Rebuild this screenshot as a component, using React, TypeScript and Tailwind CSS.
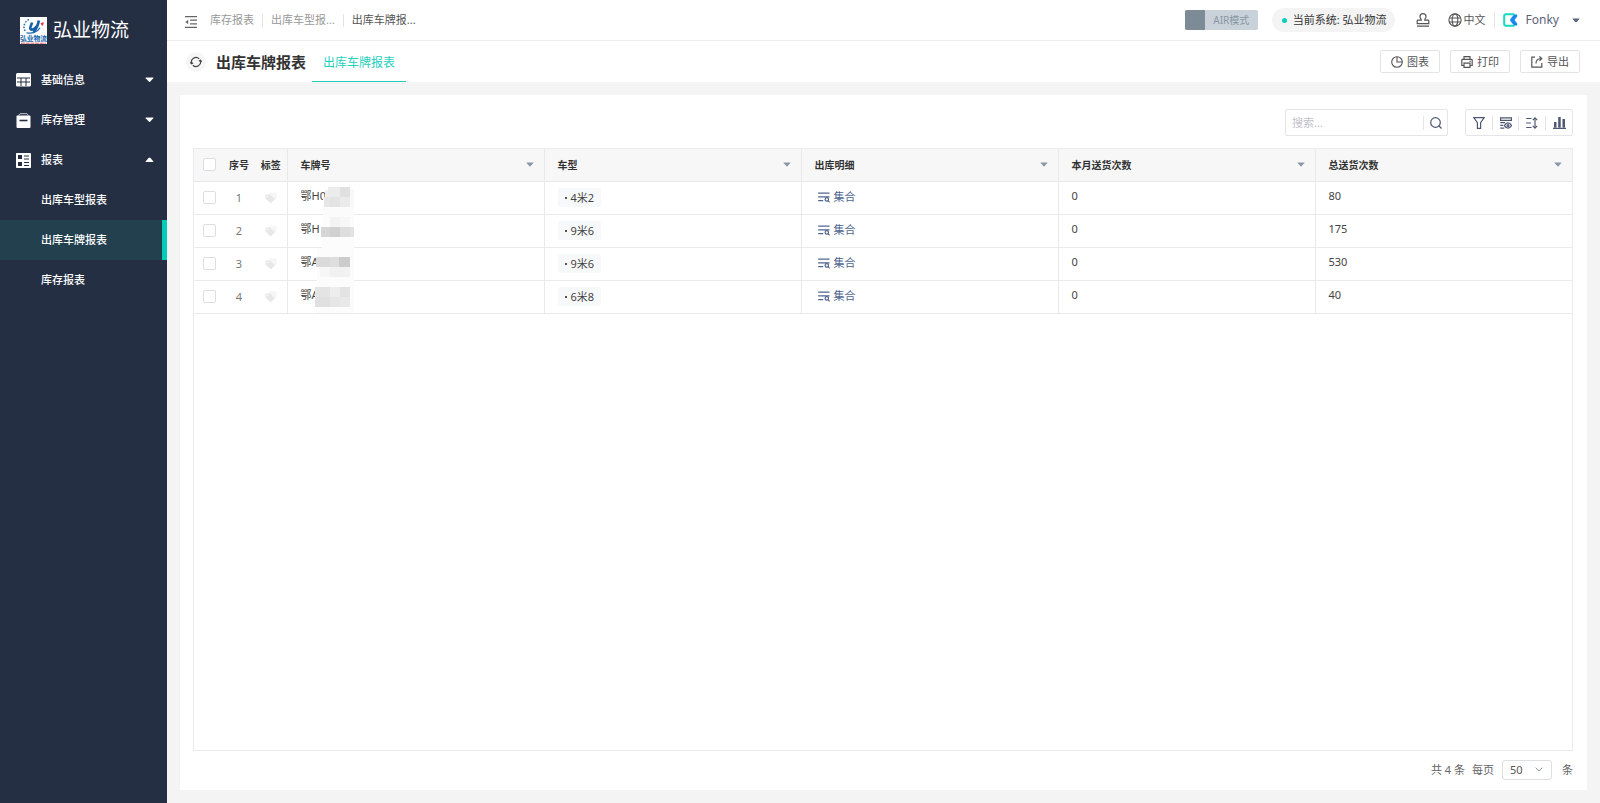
import React, { useState } from 'react';

type IconProps = { className?: string };

interface Row {
  id: number;
  plate: string;
  model: string;
  month: number;
  total: number;
  mask: [number, number, number, number, string][];
}

// mask: x, y, width, height, fill of every block laid over the plate number
const ROWS: Row[] = [
  {
    id: 1,
    plate: '鄂H0',
    model: '4米2',
    month: 0,
    total: 80,
    mask: [
      [23, 15, 31, 18, '#fbfbfb'],
      [25, 8, 6, 7, '#eeeeee'],
      [28, 5, 12, 10, '#ececec'],
      [40, 5, 10, 10, '#e0e0e0'],
      [50, 7, 4, 18, '#f8f8f8'],
      [24, 15, 6, 10, '#e6e6e6'],
      [30, 15, 10, 10, '#e3e3e3'],
      [40, 15, 10, 10, '#ebebeb'],
    ],
  },
  {
    id: 2,
    plate: '鄂H',
    model: '9米6',
    month: 0,
    total: 175,
    mask: [
      [22, 0, 32, 33, '#fcfcfc'],
      [30, 2, 10, 10, '#f3f3f3'],
      [40, 2, 10, 10, '#f7f7f7'],
      [21, 12, 9, 10, '#d6d6d6'],
      [30, 12, 10, 10, '#d0d0d0'],
      [40, 12, 10, 10, '#dddddd'],
      [50, 12, 4, 10, '#e2e2e2'],
    ],
  },
  {
    id: 3,
    plate: '鄂A',
    model: '9米6',
    month: 0,
    total: 530,
    mask: [
      [17, 0, 37, 33, '#fcfcfc'],
      [16, 9, 14, 10, '#dadada'],
      [30, 9, 9, 10, '#dedede'],
      [39, 9, 11, 10, '#cccccc'],
      [20, 19, 10, 10, '#f7f7f7'],
      [30, 19, 20, 10, '#f1f1f1'],
    ],
  },
  {
    id: 4,
    plate: '鄂A',
    model: '6米8',
    month: 0,
    total: 40,
    mask: [
      [16, 0, 38, 32, '#fcfcfc'],
      [15, 6, 15, 10, '#e4e4e4'],
      [30, 6, 10, 10, '#ededed'],
      [40, 6, 10, 10, '#e3e3e3'],
      [15, 16, 15, 10, '#e0e0e0'],
      [30, 16, 10, 10, '#e6e6e6'],
      [40, 16, 10, 10, '#e9e9e9'],
    ],
  },
];

const COLUMNS = ['车牌号', '车型', '出库明细', '本月送货次数', '总送货次数'];

function Caret({ className }: IconProps) {
  return (
    <svg viewBox="0 0 10 6" className={className} fill="currentColor" aria-hidden="true">
      <path d="M1 0.5h8q.6.2.2.8L5.6 5.4q-.6.5-1.2 0L.8 1.3Q.4.7 1 .5z" />
    </svg>
  );
}

function LogoIcon() {
  return (
    <svg viewBox="0 0 27 27" className="size-[27px] shrink-0" aria-hidden="true">
      <rect width="27" height="27" fill="#fff" />
      <path d="M9 2.600A8 8 0 0 0 4 9q-.3 3.500 2 6" fill="none" stroke="#1c69ae" strokeWidth="1.500" strokeDasharray="1.600 1.400" />
      <path d="M6.500 15.800c5 1.200 11-.5 13.500-5" fill="none" stroke="#1c69ae" strokeWidth="1.300" />
      <path d="M12 5.500c-.5 3-2.500 4.500-1.500 6.500 1.500 2 5-1 6.500-3" fill="none" stroke="#1660a8" strokeWidth="2.600" />
      <path d="M18.800 3.500c-.5 4-2.300 8-5.300 11.500" fill="none" stroke="#1660a8" strokeWidth="2.600" />
      <path d="m21 6.500 2.300-.7-.8 2.600z" fill="#e03a3e" stroke="#e03a3e" />
      <text x="13.500" y="23.600" textAnchor="middle" fontSize="6.800" fontWeight="700" fill="#1565ad">
        弘业物流
      </text>
      <path d="M1 26.200h25" stroke="#dc5a5e" strokeWidth="1" strokeDasharray="4 .7" />
    </svg>
  );
}

function TableIcon() {
  return (
    <svg viewBox="0 0 15 14" className="h-[14px] w-[15px]" aria-hidden="true">
      <rect width="15" height="13.500" rx="1.500" fill="#fff" />
      <path d="M1 5h13M1 9h13M5 5v8M10 5v8" stroke="#252f44" strokeWidth="1" fill="none" />
    </svg>
  );
}

function BoxIcon() {
  return (
    <svg viewBox="0 0 15 15" className="size-[15px]" aria-hidden="true">
      <path d="M2.500 2.500 4 .7h7l1.500 1.800" fill="none" stroke="#c6cad2" />
      <rect x=".5" y="2.500" width="14" height="12.500" rx="1" fill="#fff" />
      <path d="M3.500 7.500h8" stroke="#252f44" strokeWidth="1.600" />
    </svg>
  );
}

function ReportIcon() {
  return (
    <svg viewBox="0 0 15 15" className="size-[15px]" aria-hidden="true">
      <rect width="15" height="15" rx=".8" fill="#fff" />
      <path d="M2 2h4v4H2zM2 9h4v4H2z" fill="#252f44" />
      <path d="M8 3h5M8 6h5M8 9.500h5M8 12.500h5" stroke="#252f44" />
    </svg>
  );
}

function FoldIcon() {
  return (
    <svg viewBox="0 0 12 12" className="size-3" fill="none" stroke="currentColor" strokeWidth="1.200" aria-hidden="true">
      <path d="M0 .7h12M5 4.200h7M5 7.800h7M0 11.300h12" />
      <path d="M3.200 3.700v4.600L.4 6z" fill="currentColor" stroke="none" />
    </svg>
  );
}

function RefreshIcon() {
  return (
    <svg viewBox="0 0 14 14" className="size-3" fill="none" stroke="currentColor" strokeWidth="1.400" aria-hidden="true">
      <path d="M2 8.800A5.300 5.300 0 0 1 10.700 3.200M12 5.200A5.300 5.300 0 0 1 3.300 10.800" />
      <path d="M.3 7.600 1.700 9l1.900-1M13.700 6.400 12.300 5l-1.900 1" />
    </svg>
  );
}

function StampIcon() {
  return (
    <svg viewBox="0 0 14 14" className="size-[14px]" fill="none" stroke="currentColor" strokeWidth="1.200" aria-hidden="true">
      <path d="M5.300 7.200C5.300 5.800 4 5.200 4 3.700a3 3 0 0 1 6 0c0 1.500-1.300 2.100-1.300 3.500H12a.8.8 0 0 1 .8.800v2.700H1.200V8a.8.8 0 0 1 .8-.8zM1 13.200h12" />
    </svg>
  );
}

function GlobeIcon() {
  return (
    <svg viewBox="0 0 14 14" className="size-[14px]" fill="none" stroke="currentColor" strokeWidth="1.100" aria-hidden="true">
      <circle cx="7" cy="7" r="6.100" />
      <ellipse cx="7" cy="7" rx="2.800" ry="6.100" />
      <path d="M1.200 5h11.600M1.200 9h11.600" />
    </svg>
  );
}

function BrandIcon() {
  return (
    <svg viewBox="0 0 15 14" className="h-[14px] w-[15px]" fill="none" aria-hidden="true">
      <path d="M11.500 1.200H3a1.800 1.800 0 0 0-1.800 1.800v8A1.800 1.800 0 0 0 3 12.800h8.500" stroke="#13dcc3" strokeWidth="2" />
      <path d="M11 1.500h3.200v2L11.500 7l2.700 3.500v2H11L7.200 7.800V6.200z" fill="#1689ee" />
    </svg>
  );
}

function PieIcon() {
  return (
    <svg viewBox="0 0 12 12" className="size-3" fill="none" stroke="currentColor" strokeWidth="1.100" aria-hidden="true">
      <circle cx="6" cy="6" r="5.300" />
      <path d="M6 .7V6h5.300" />
    </svg>
  );
}

function PrintIcon() {
  return (
    <svg viewBox="0 0 12 12" className="size-3" fill="none" stroke="currentColor" strokeWidth="1.200" aria-hidden="true">
      <path d="M3 3.400V.7h6v2.700M3 9.500H.8V4.200q0-.8.8-.8h8.800q.8 0 .8.800v5.300H9" />
      <path d="M3 7.200h6v4.100H3zM8.500 5.300h1.200" />
    </svg>
  );
}

function ExportIcon() {
  return (
    <svg viewBox="0 0 12 12" className="size-3" fill="none" stroke="currentColor" strokeWidth="1.200" aria-hidden="true">
      <path d="M4 1.200H.8v10h10V7" />
      <path d="M5 7.500c0-3 1.500-4.800 5-5M8.300.4l2.500 2.100-2.300 2.200" />
    </svg>
  );
}

function SearchIcon() {
  return (
    <svg viewBox="0 0 12 12" className="size-3" fill="none" stroke="currentColor" strokeWidth="1.200" aria-hidden="true">
      <circle cx="5.500" cy="5.500" r="4.800" />
      <path d="m9 9 2.500 2.500" />
    </svg>
  );
}

function FilterIcon() {
  return (
    <svg viewBox="0 0 12 12" className="size-3" fill="none" stroke="currentColor" strokeWidth="1.200" aria-hidden="true">
      <path d="M.8.700h10.400L7.600 5.700v5.600H4.400V5.700z" />
    </svg>
  );
}

function FieldsIcon() {
  return (
    <svg viewBox="0 0 12 12" className="size-3" fill="none" stroke="currentColor" strokeWidth="1.200" aria-hidden="true">
      <path d="M.6.800h10.800v2.600H.6zM.3 5.700H5M.3 8.300h3M.3 11.200h4" />
      <path d="M4.400 8.600q1.600-2.700 3.600-2.700t3.600 2.700q-1.600 2.600-3.600 2.600T4.400 8.600z" />
      <circle cx="8" cy="8.600" r="1" />
    </svg>
  );
}

function LineHeightIcon() {
  return (
    <svg viewBox="0 0 12 12" className="size-3" fill="none" stroke="currentColor" strokeWidth="1.200" aria-hidden="true">
      <path d="M.2 1.500h5.300M.2 6H5M.2 10.500h5.300M9 1v10" />
      <path d="M6.800 3.200 9 .9l2.200 2.300M6.800 8.800 9 11.100l2.200-2.300" />
    </svg>
  );
}

function ChartIcon() {
  return (
    <svg viewBox="0 0 13 12" className="h-3 w-[13px]" fill="currentColor" aria-hidden="true">
      <path d="M1 5h2.500v5.500H1zM5.200 0h2.500v10.500H5.200zM9.500 2H12v8.500H9.500zM0 10.800h13V12H0z" />
    </svg>
  );
}

function TagsIcon() {
  return (
    <svg viewBox="0 0 12 12" className="size-3" aria-hidden="true">
      <path d="M3.500.6h8.100v6L8 9z" fill="#f5f6f7" />
      <path d="M.4 2.400h4.800l4.800 4.800-4.300 4.300L.4 6.600z" fill="#e6e8ea" />
      <circle cx="2.200" cy="4.200" r=".7" fill="#fff" />
    </svg>
  );
}

function DetailIcon() {
  return (
    <svg viewBox="0 0 12 11" className="h-[11px] w-3" fill="none" stroke="currentColor" strokeWidth="1.200" aria-hidden="true">
      <path d="M.2 1.200h11.300M.2 4.800h11.300M.2 8.600h5" />
      <circle cx="8.800" cy="7.400" r="1.700" />
      <path d="m10 8.700 1.600 1.700" />
    </svg>
  );
}

function Checkbox({ label }: { label: string }) {
  return (
    <input
      type="checkbox"
      aria-label={label}
      className="block size-[13px] ml-[9px] appearance-none rounded-xs border border-[#dcdee3] bg-white checked:bg-[#00cdb8]"
    />
  );
}

interface MenuGroupProps {
  icon: React.ReactNode;
  label: string;
  open?: boolean;
}

function MenuGroup({ icon, label, open }: MenuGroupProps) {
  return (
    <button type="button" aria-expanded={!!open} className="flex h-10 w-full items-center pl-4 pr-[13px] font-medium">
      {icon}
      <span className="ml-[10px] flex-1 pt-px text-left">{label}</span>
      <Caret className={open ? 'w-[9px] rotate-180' : 'w-[9px]'} />
    </button>
  );
}

function MenuLink({ label, active }: { label: string; active?: boolean }) {
  return (
    <a
      href="#"
      aria-current={active ? 'page' : undefined}
      className={
        active
          ? 'flex h-10 items-center border-r-5 border-[#00cdb8] bg-[#23404f] pl-[41px] pt-px font-medium'
          : 'flex h-10 items-center pl-[41px] pt-px font-medium'
      }
    >
      {label}
    </a>
  );
}

function Sidebar() {
  return (
    <aside className="w-[167px] shrink-0 bg-[#252f44] text-[11px] text-white">
      <div className="flex h-[60px] items-center gap-[6px] pl-5 text-[19px] leading-6">
        <LogoIcon />
        <span>弘业物流</span>
      </div>
      <nav>
        <MenuGroup icon={<TableIcon />} label="基础信息" />
        <MenuGroup icon={<BoxIcon />} label="库存管理" />
        <MenuGroup icon={<ReportIcon />} label="报表" open />
        <MenuLink label="出库车型报表" />
        <MenuLink label="出库车牌报表" active />
        <MenuLink label="库存报表" />
      </nav>
    </aside>
  );
}

function TopBar() {
  return (
    <header className="flex h-[41px] items-center border-b border-[#eeeeee] bg-white pl-[18px] pr-5 text-[11px] text-[#555]">
      <button type="button" aria-label="收起菜单" className="mt-1 text-[#666]">
        <FoldIcon />
      </button>
      <nav className="ml-[13px] flex flex-1 items-center gap-2 text-[#999]">
        <a href="#">库存报表</a>
        <span className="h-[13px] w-px bg-[#e2e2e2]" />
        <a href="#">出库车型报...</a>
        <span className="h-[13px] w-px bg-[#e2e2e2]" />
        <a href="#" className="text-[#555]">
          出库车牌报...
        </a>
      </nav>
      <button type="button" className="flex h-5 w-[73px] items-center rounded-xs bg-[#cad2d9] text-[10px] text-[#8797a5]">
        <span className="h-5 w-5 rounded-l-xs bg-[#7d8b96]" />
        <span className="flex-1 text-center">AIR模式</span>
      </button>
      <div className="ml-[14px] flex h-6 items-center gap-[6px] rounded-full bg-[#f4f4f4] pl-[10px] pr-2 pt-px text-[#333]">
        <span className="size-[5px] rounded-full bg-[#0acfb9]" />
        <span>当前系统: 弘业物流</span>
      </div>
      <button type="button" aria-label="审批" className="ml-[21px]">
        <StampIcon />
      </button>
      <button type="button" className="ml-[18px] flex items-center gap-[2px]">
        <GlobeIcon />
        中文
      </button>
      <span className="mx-2 h-4 w-px bg-[#e6e6e6]" />
      <button type="button" className="flex items-center text-xs text-[#5b6178]">
        <BrandIcon />
        <span className="ml-[8px]">Fonky</span>
        <Caret className="ml-[13px] w-2" />
      </button>
    </header>
  );
}

function ToolButton({ icon, children }: { icon: React.ReactNode; children: React.ReactNode }) {
  return (
    <button type="button" className="flex h-[23px] w-[60px] items-center justify-center gap-1 rounded-xs border border-[#e3e3e6] bg-white">
      {icon}
      <span className="pt-px">{children}</span>
    </button>
  );
}

function TitleBar() {
  return (
    <div className="flex h-[41px] items-center bg-white pl-[19px] pr-5 text-[11px] text-[#555]">
      <button type="button" aria-label="刷新" className="flex size-5 items-center justify-center rounded-full bg-[#f6f6f6] text-[#444]">
        <RefreshIcon />
      </button>
      <h1 className="ml-[10px] text-[15px] leading-5 font-bold text-[#333]">出库车牌报表</h1>
      <a href="#" className="ml-[6px] flex h-full items-center border-b border-[#1fd0bd] px-[11px] pt-[3px] text-xs text-[#1fd0bd]">
        出库车牌报表
      </a>
      <div className="ml-auto flex gap-[10px]">
        <ToolButton icon={<PieIcon />}>图表</ToolButton>
        <ToolButton icon={<PrintIcon />}>打印</ToolButton>
        <ToolButton icon={<ExportIcon />}>导出</ToolButton>
      </div>
    </div>
  );
}

function Toolbar() {
  const [keyword, setKeyword] = useState('');

  return (
    <div className="flex justify-end gap-[17px] text-[#4f5873]">
      <div className="flex h-[27px] w-[163px] items-center rounded-xs border border-[#e3e5e9]">
        <input
          type="text"
          aria-label="搜索"
          value={keyword}
          onChange={(e) => setKeyword(e.target.value)}
          placeholder="搜索..."
          className="min-w-0 flex-1 px-[6px] pt-px text-[11px] outline-none placeholder:text-[#bfc2c8]"
        />
        <button type="button" aria-label="开始搜索" className="flex h-[14px] w-6 items-center justify-center border-l border-[#e3e5e9]">
          <SearchIcon />
        </button>
      </div>
      <div className="flex h-[27px] items-center divide-x divide-[#e0e2e6] rounded-xs border border-[#e3e5e9]">
        <button type="button" aria-label="筛选" className="flex h-[14px] w-[27px] items-center justify-center">
          <FilterIcon />
        </button>
        <button type="button" aria-label="字段显示" className="flex h-[14px] w-[26px] items-center justify-center">
          <FieldsIcon />
        </button>
        <button type="button" aria-label="行高" className="flex h-[14px] w-[27px] items-center justify-center">
          <LineHeightIcon />
        </button>
        <button type="button" aria-label="统计" className="flex h-[14px] w-[26px] items-center justify-center">
          <ChartIcon />
        </button>
      </div>
    </div>
  );
}

function ReportTable() {
  return (
    <table className="w-full table-fixed border-collapse text-left text-[11px] leading-4 text-[#444]">
      <colgroup>
        <col className="w-[29px]" />
        <col className="w-[32px]" />
        <col className="w-[32px]" />
        {COLUMNS.map((name) => (
          <col key={name} />
        ))}
      </colgroup>
      <thead>
        <tr className="h-[32px] border-b border-[#e6e7e9] bg-[#f7f7f7] text-[10px] text-[#333]">
          <th>
            <Checkbox label="全选" />
          </th>
          <th className="text-center font-bold">序号</th>
          <th className="border-r border-[#e8e9eb] text-center font-bold">标签</th>
          {COLUMNS.map((name) => (
            <th key={name} className="border-r border-[#e8e9eb] pl-[13px] pr-[10px] font-bold last:border-r-0">
              <div className="flex items-center justify-between">
                {name}
                <Caret className="w-2 text-[#8a97a8]" />
              </div>
            </th>
          ))}
        </tr>
      </thead>
      <tbody>
        {ROWS.map((row) => (
          <tr key={row.id} className="h-[33px] border-b border-[#e9eaec]">
            <td>
              <Checkbox label={`选择第${row.id}行`} />
            </td>
            <td className="text-center text-[#777]">{row.id}</td>
            <td className="border-r border-[#e8e9eb]">
              <div className="flex justify-center">
                <TagsIcon />
              </div>
            </td>
            <td className="relative border-r border-[#e8e9eb] pb-[3px] pl-[13px]">
              {row.plate}
              <svg viewBox="0 0 56 33" className="absolute left-3 top-0 h-[33px] w-14" aria-hidden="true">
                {row.mask.map(([x, y, w, h, fill], i) => (
                  <rect key={i} x={x} y={y} width={w} height={h} fill={fill} />
                ))}
              </svg>
            </td>
            <td className="border-r border-[#e8e9eb] pl-[13px]">
              <span className="inline-flex h-[19px] items-center gap-1 rounded-xs bg-[#f7f8fa] px-[7px] align-middle">
                <span className="size-[2px] bg-[#555]" />
                {row.model}
              </span>
            </td>
            <td className="border-r border-[#e8e9eb] pb-px pl-4">
              <a href="#" className="flex items-center gap-1 text-[#51658f]">
                <DetailIcon />
                集合
              </a>
            </td>
            <td className="border-r border-[#e8e9eb] pb-[3px] pl-[13px]">{row.month}</td>
            <td className="pb-[3px] pl-[13px]">{row.total}</td>
          </tr>
        ))}
      </tbody>
    </table>
  );
}

function Pager() {
  return (
    <div className="flex items-center justify-end pt-[9px] text-[11px] text-[#666]">
      <span>共 4 条</span>
      <label htmlFor="page-size" className="ml-[7px]">
        每页
      </label>
      <div className="relative ml-2 mr-[10px]">
        <select
          id="page-size"
          defaultValue="50"
          className="block h-5 w-[50px] appearance-none rounded-[3px] border border-[#dcdfe4] bg-white pl-[7px] text-[11px] leading-4 text-[#555]"
        >
          <option>20</option>
          <option>50</option>
          <option>100</option>
        </select>
        <svg viewBox="0 0 8 5" className="pointer-events-none absolute right-[9px] top-[7px] w-2" fill="none" stroke="#8d93a5" aria-hidden="true">
          <path d="m.7.700 3.300 3.300L7.300.7" />
        </svg>
      </div>
      <span>条</span>
    </div>
  );
}

export default function App() {
  return (
    <div className="flex min-h-screen bg-[#f4f4f4] font-['Noto_Sans','Noto_Sans_CJK_SC',sans-serif]">
      <Sidebar />
      <div className="flex min-w-0 flex-1 flex-col">
        <TopBar />
        <TitleBar />
        <main className="flex flex-1 flex-col p-[13px]">
          <section className="flex flex-1 flex-col bg-white pb-[10px] pl-[13px] pr-[14px] pt-[14px]">
            <Toolbar />
            <div className="mt-3 flex-1 border border-[#ebebed]">
              <ReportTable />
            </div>
            <Pager />
          </section>
        </main>
      </div>
    </div>
  );
}
